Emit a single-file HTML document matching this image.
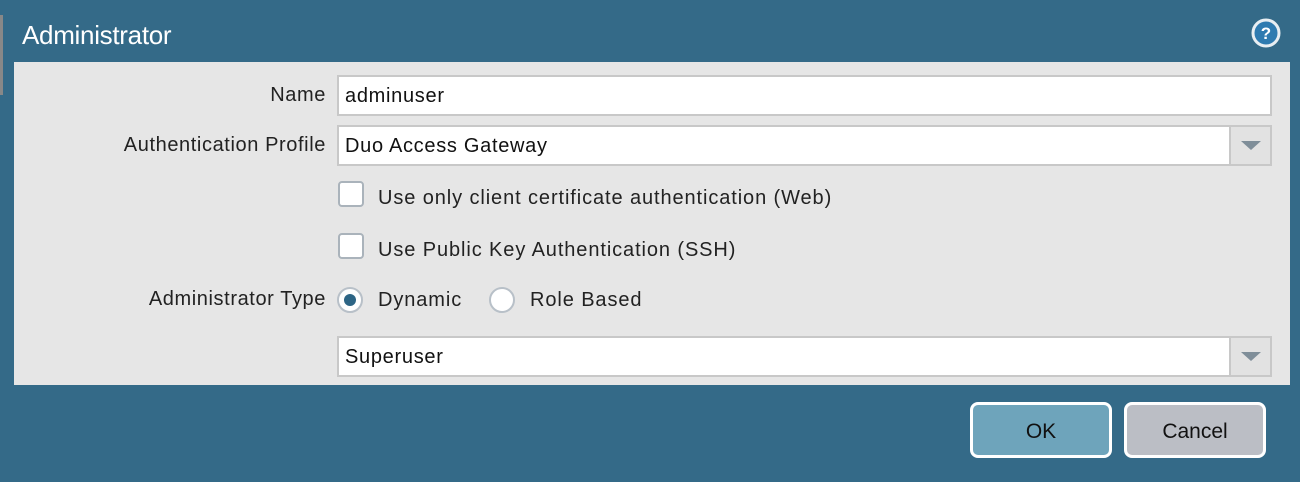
<!DOCTYPE html>
<html><head><style>
body{margin:0;width:1300px;height:482px;background:#346a88;position:relative;overflow:hidden;font-family:"Liberation Sans",sans-serif;color:#222}
.a{position:absolute}
.title{left:22px;top:20px;color:#fff;font-size:26px;letter-spacing:-0.3px}
.panel{left:14px;top:62px;width:1276px;height:323px;background:#e6e6e6}
.lbl{font-size:20px;text-align:right;width:326px;left:0;letter-spacing:0.6px}
.inp{background:#fff;border:2px solid #c8c8c8;box-sizing:border-box;font-size:20px;padding-left:6px;line-height:39px;color:#111;letter-spacing:0.7px}
.dd{position:absolute;right:0;top:0;width:41px;height:100%;background:#e2e2e2;border-left:2px solid #c8c8c8;box-sizing:border-box}
.dd:after{content:"";position:absolute;left:10px;top:14px;border-left:10px solid transparent;border-right:10px solid transparent;border-top:9px solid #7f8e99}
.cb{width:26px;height:26px;background:#fff;border:2px solid #aab3bb;border-radius:4px;box-sizing:border-box}
.rd{width:26px;height:26px;background:#fff;border:2px solid #b8c0c8;border-radius:50%;box-sizing:border-box}
.txt{font-size:20px;color:#222;letter-spacing:0.9px}
.btn{border:3px solid #fff;border-radius:8px;box-sizing:border-box;font-size:21px;text-align:center;line-height:53px;color:#111}
</style></head><body>
<div class="a" style="left:0;top:15px;width:3px;height:80px;background:#888"></div>
<div class="a title">Administrator</div>
<svg class="a" style="left:1251px;top:18px" width="30" height="30" viewBox="0 0 30 30"><circle cx="15" cy="15" r="13" fill="#2f7bb0" stroke="#e8eef2" stroke-width="3"/><text x="15" y="21" font-size="17" font-weight="bold" text-anchor="middle" fill="#fff" font-family="Liberation Sans">?</text></svg>
<div class="a panel"></div>
<div class="a lbl" style="top:84px">Name</div>
<div class="a inp" style="left:337px;top:75px;width:935px;height:41px">adminuser</div>
<div class="a lbl" style="top:134px">Authentication Profile</div>
<div class="a inp" style="left:337px;top:125px;width:935px;height:41px">Duo Access Gateway<div class="dd"></div></div>
<div class="a cb" style="left:338px;top:181px"></div>
<div class="a txt" style="left:378px;top:187px">Use only client certificate authentication (Web)</div>
<div class="a cb" style="left:338px;top:233px"></div>
<div class="a txt" style="left:378px;top:239px">Use Public Key Authentication (SSH)</div>
<div class="a lbl" style="top:288px">Administrator Type</div>
<div class="a rd" style="left:337px;top:287px"></div>
<div class="a" style="left:344px;top:294px;width:12px;height:12px;border-radius:50%;background:#2d6585"></div>
<div class="a txt" style="left:378px;top:289px">Dynamic</div>
<div class="a rd" style="left:489px;top:287px"></div>
<div class="a txt" style="left:530px;top:289px">Role Based</div>
<div class="a inp" style="left:337px;top:336px;width:935px;height:41px">Superuser<div class="dd"></div></div>
<div class="a btn" style="left:970px;top:402px;width:142px;height:56px;background:#6ea4bb">OK</div>
<div class="a btn" style="left:1124px;top:402px;width:142px;height:56px;background:#bbbec5">Cancel</div>
</body></html>
